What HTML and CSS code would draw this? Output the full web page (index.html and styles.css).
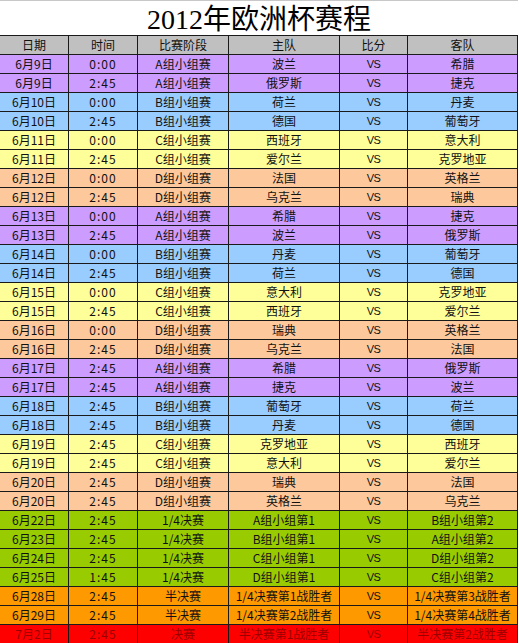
FILE: index.html
```html
<!DOCTYPE html>
<html lang="zh-CN">
<head>
<meta charset="utf-8">
<title>2012年欧洲杯赛程</title>
<link rel="stylesheet" href="styles.css">
</head>
<body>
<div class="sheet">
  <div class="title">2012年欧洲杯赛程</div>
  <div class="row head"><div>日期</div><div>时间</div><div>比赛阶段</div><div>主队</div><div>比分</div><div>客队</div></div>

  <div class="row a"><div>6月9日</div><div class="t">0:00</div><div>A组小组赛</div><div>波兰</div><div class="vs">VS</div><div>希腊</div></div>
  <div class="row a"><div>6月9日</div><div class="t">2:45</div><div>A组小组赛</div><div>俄罗斯</div><div class="vs">VS</div><div>捷克</div></div>
  <div class="row b"><div>6月10日</div><div class="t">0:00</div><div>B组小组赛</div><div>荷兰</div><div class="vs">VS</div><div>丹麦</div></div>
  <div class="row b"><div>6月10日</div><div class="t">2:45</div><div>B组小组赛</div><div>德国</div><div class="vs">VS</div><div>葡萄牙</div></div>
  <div class="row c"><div>6月11日</div><div class="t">0:00</div><div>C组小组赛</div><div>西班牙</div><div class="vs">VS</div><div>意大利</div></div>
  <div class="row c"><div>6月11日</div><div class="t">2:45</div><div>C组小组赛</div><div>爱尔兰</div><div class="vs">VS</div><div>克罗地亚</div></div>
  <div class="row d"><div>6月12日</div><div class="t">0:00</div><div>D组小组赛</div><div>法国</div><div class="vs">VS</div><div>英格兰</div></div>
  <div class="row d"><div>6月12日</div><div class="t">2:45</div><div>D组小组赛</div><div>乌克兰</div><div class="vs">VS</div><div>瑞典</div></div>

  <div class="row a"><div>6月13日</div><div class="t">0:00</div><div>A组小组赛</div><div>希腊</div><div class="vs">VS</div><div>捷克</div></div>
  <div class="row a"><div>6月13日</div><div class="t">2:45</div><div>A组小组赛</div><div>波兰</div><div class="vs">VS</div><div>俄罗斯</div></div>
  <div class="row b"><div>6月14日</div><div class="t">0:00</div><div>B组小组赛</div><div>丹麦</div><div class="vs">VS</div><div>葡萄牙</div></div>
  <div class="row b"><div>6月14日</div><div class="t">2:45</div><div>B组小组赛</div><div>荷兰</div><div class="vs">VS</div><div>德国</div></div>
  <div class="row c"><div>6月15日</div><div class="t">0:00</div><div>C组小组赛</div><div>意大利</div><div class="vs">VS</div><div>克罗地亚</div></div>
  <div class="row c"><div>6月15日</div><div class="t">2:45</div><div>C组小组赛</div><div>西班牙</div><div class="vs">VS</div><div>爱尔兰</div></div>
  <div class="row d"><div>6月16日</div><div class="t">0:00</div><div>D组小组赛</div><div>瑞典</div><div class="vs">VS</div><div>英格兰</div></div>
  <div class="row d"><div>6月16日</div><div class="t">2:45</div><div>D组小组赛</div><div>乌克兰</div><div class="vs">VS</div><div>法国</div></div>

  <div class="row a"><div>6月17日</div><div class="t">2:45</div><div>A组小组赛</div><div>希腊</div><div class="vs">VS</div><div>俄罗斯</div></div>
  <div class="row a"><div>6月17日</div><div class="t">2:45</div><div>A组小组赛</div><div>捷克</div><div class="vs">VS</div><div>波兰</div></div>
  <div class="row b"><div>6月18日</div><div class="t">2:45</div><div>B组小组赛</div><div>葡萄牙</div><div class="vs">VS</div><div>荷兰</div></div>
  <div class="row b"><div>6月18日</div><div class="t">2:45</div><div>B组小组赛</div><div>丹麦</div><div class="vs">VS</div><div>德国</div></div>
  <div class="row c"><div>6月19日</div><div class="t">2:45</div><div>C组小组赛</div><div>克罗地亚</div><div class="vs">VS</div><div>西班牙</div></div>
  <div class="row c"><div>6月19日</div><div class="t">2:45</div><div>C组小组赛</div><div>意大利</div><div class="vs">VS</div><div>爱尔兰</div></div>
  <div class="row d"><div>6月20日</div><div class="t">2:45</div><div>D组小组赛</div><div>瑞典</div><div class="vs">VS</div><div>法国</div></div>
  <div class="row d"><div>6月20日</div><div class="t">2:45</div><div>D组小组赛</div><div>英格兰</div><div class="vs">VS</div><div>乌克兰</div></div>

  <div class="row qf"><div>6月22日</div><div class="t">2:45</div><div>1/4决赛</div><div>A组小组第1</div><div class="vs">VS</div><div>B组小组第2</div></div>
  <div class="row qf"><div>6月23日</div><div class="t">2:45</div><div>1/4决赛</div><div>B组小组第1</div><div class="vs">VS</div><div>A组小组第2</div></div>
  <div class="row qf"><div>6月24日</div><div class="t">2:45</div><div>1/4决赛</div><div>C组小组第1</div><div class="vs">VS</div><div>D组小组第2</div></div>
  <div class="row qf"><div>6月25日</div><div class="t">1:45</div><div>1/4决赛</div><div>D组小组第1</div><div class="vs">VS</div><div>C组小组第2</div></div>
  <div class="row sf"><div>6月28日</div><div class="t">2:45</div><div>半决赛</div><div>1/4决赛第1战胜者</div><div class="vs">VS</div><div>1/4决赛第3战胜者</div></div>
  <div class="row sf"><div>6月29日</div><div class="t">2:45</div><div>半决赛</div><div>1/4决赛第2战胜者</div><div class="vs">VS</div><div>1/4决赛第4战胜者</div></div>
  <div class="row fin"><div>7月2日</div><div class="t">2:45</div><div>决赛</div><div>半决赛第1战胜者</div><div class="vs">VS</div><div>半决赛第2战胜者</div></div>
</div>
</body>
</html>
```

FILE: styles.css
```css
html, body {
  margin: 0;
  padding: 0;
  background: #ffffff;
}

.sheet {
  width: 517px;
  padding-right: 1px;
  display: grid;
  grid-template-columns: 68px 68px 90px 110px 67px 109px;
  grid-template-rows: 35px;
  grid-auto-rows: 18px;
  gap: 1px;
  background: #1a1a1a;
  font-family: "Noto Sans CJK SC", sans-serif;
  font-size: 12px;
  color: #111111;
}

.title {
  grid-column: 1 / -1;
  margin-right: -1px;
  border-top: 1px solid #c8c8c8;
  box-sizing: border-box;
  background: #ffffff;
  display: flex;
  align-items: center;
  justify-content: center;
  font-family: "Liberation Serif", "Noto Sans CJK SC", serif;
  font-size: 28px;
  font-weight: 400;
  line-height: 1;
  color: #000000;
  padding-top: 3px;
}

.row {
  display: contents;
}

.row > div {
  display: flex;
  align-items: center;
  justify-content: center;
  line-height: 1;
  white-space: nowrap;
}

.row > .t {
  letter-spacing: 1px;
}

.row > .vs {
  font-family: "Liberation Sans Narrow", "Liberation Sans", sans-serif;
  font-size: 11px;
  letter-spacing: -0.5px;
}

.head > div { background: #c0c0c0; }
.a > div { background: #cc9cff; }
.b > div { background: #99ccff; }
.c > div { background: #ffff99; }
.d > div { background: #fdc99c; }
.qf > div { background: #99cc00; }
.sf > div { background: #ff9900; }
.fin > div { background: #ff0000; color: #9a0000; }
```
